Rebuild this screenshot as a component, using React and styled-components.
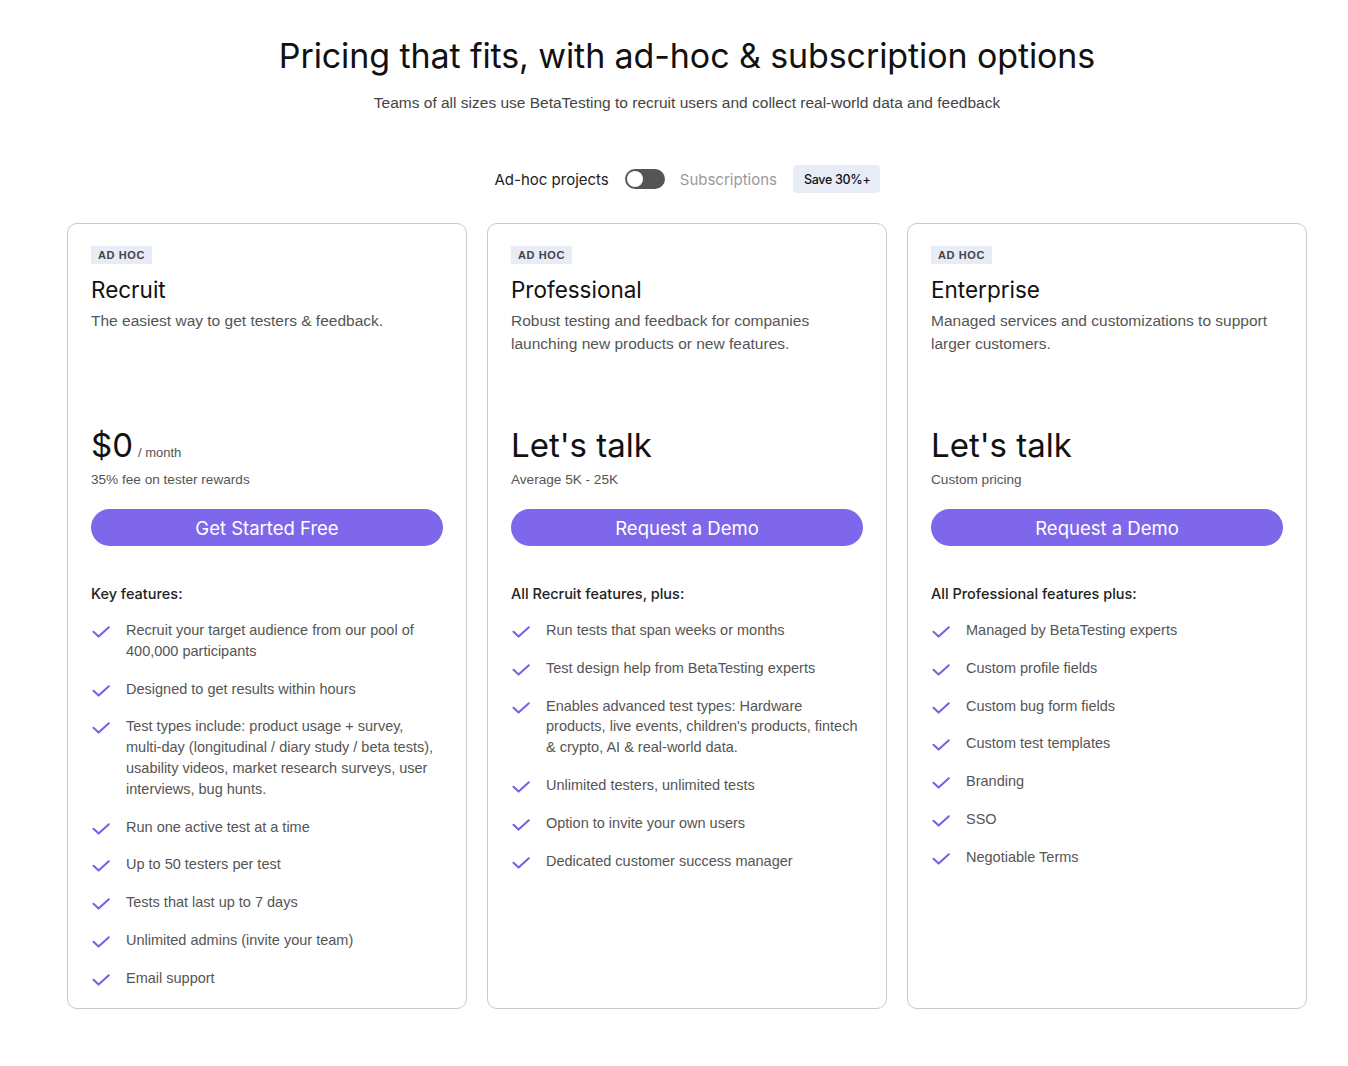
import React from 'react';
import styled, { createGlobalStyle } from 'styled-components';

const GlobalStyle = createGlobalStyle`
  * { box-sizing: border-box; }
  body {
    margin: 0;
    background: #ffffff;
    font-family: 'Liberation Sans', Arial, sans-serif;
    color: #222;
  }
`;

const plans = [
  {
    name: 'Recruit',
    desc: 'The easiest way to get testers & feedback.',
    price: '$0',
    per: '/ month',
    note: '35% fee on tester rewards',
    cta: 'Get Started Free',
    heading: 'Key features:',
    features: [
      'Recruit your target audience from our pool of 400,000 participants',
      'Designed to get results within hours',
      'Test types include: product usage + survey, multi\u2011day (longitudinal / diary study / beta tests), usability videos, market research surveys, user interviews, bug hunts.',
      'Run one active test at a time',
      'Up to 50 testers per test',
      'Tests that last up to 7 days',
      'Unlimited admins (invite your team)',
      'Email support',
    ],
  },
  {
    name: 'Professional',
    desc: 'Robust testing and feedback for companies launching new products or new features.',
    price: "Let's talk",
    note: 'Average 5K - 25K',
    cta: 'Request a Demo',
    heading: 'All Recruit features, plus:',
    features: [
      'Run tests that span weeks or months',
      'Test design help from BetaTesting experts',
      "Enables advanced test types: Hardware products, live events, children's products, fintech & crypto, AI & real-world data.",
      'Unlimited testers, unlimited tests',
      'Option to invite your own users',
      'Dedicated customer success manager',
    ],
  },
  {
    name: 'Enterprise',
    desc: 'Managed services and customizations to support larger customers.',
    price: "Let's talk",
    note: 'Custom pricing',
    cta: 'Request a Demo',
    heading: 'All Professional features plus:',
    features: [
      'Managed by BetaTesting experts',
      'Custom profile fields',
      'Custom bug form fields',
      'Custom test templates',
      'Branding',
      'SSO',
      'Negotiable Terms',
    ],
  },
];

function Check() {
  return (
    <CheckIcon viewBox="0 0 18 12" width="18" height="12">
      <path d="M1.5 5.8 L6.6 10.6 L16.8 1.2" fill="none" stroke="#7b5ce8" strokeWidth="2" strokeLinecap="round" strokeLinejoin="round" />
    </CheckIcon>
  );
}

export default function App() {
  return (
    <>
      <GlobalStyle />
      <Page>
        <Title>Pricing that fits, with ad-hoc &amp; subscription options</Title>
        <Subtitle>Teams of all sizes use BetaTesting to recruit users and collect real-world data and feedback</Subtitle>
        <ToggleRow>
          <ToggleLabel active>Ad-hoc projects</ToggleLabel>
          <Switch><Knob /></Switch>
          <ToggleLabel>Subscriptions</ToggleLabel>
          <SaveBadge>Save 30%+</SaveBadge>
        </ToggleRow>
        <Cards>
          {plans.map(plan => (
            <Card key={plan.name}>
              <Header>
                <Tag>AD HOC</Tag>
                <PlanName>{plan.name}</PlanName>
                <PlanDesc>{plan.desc}</PlanDesc>
              </Header>
              <Price>
                {plan.price}
                {plan.per && <Per>{plan.per}</Per>}
              </Price>
              <PriceNote>{plan.note}</PriceNote>
              <CtaButton>{plan.cta}</CtaButton>
              <FeatureHeading>{plan.heading}</FeatureHeading>
              <FeatureList>
                {plan.features.map(f => (
                  <Feature key={f}>
                    <Check />
                    <span>{f}</span>
                  </Feature>
                ))}
              </FeatureList>
            </Card>
          ))}
        </Cards>
      </Page>
    </>
  );
}

const Page = styled.div`
  width: 1348px;
  padding: 34px 0 56px 26px;
  display: flex;
  flex-direction: column;
  align-items: center;
`;

const Title = styled.h1`
  margin: 0;
  font-family: 'Inter', sans-serif;
  font-weight: 400;
  font-size: 34px;
  line-height: 44px;
  letter-spacing: -0.1px;
  color: #111;
`;

const Subtitle = styled.p`
  margin: 15px 0 0;
  font-size: 15.5px;
  line-height: 20px;
  color: #444;
`;

const ToggleRow = styled.div`
  display: flex;
  align-items: center;
  margin-top: 52px;
  height: 28px;
`;

const ToggleLabel = styled.span`
  font-family: 'Inter', sans-serif;
  font-size: 15px;
  color: ${props => (props.active ? '#222' : '#999')};
`;

const Switch = styled.div`
  width: 40px;
  height: 20px;
  margin: 0 15px 0 16px;
  border-radius: 10px;
  background: #555;
  padding: 2px;
  display: flex;
`;

const Knob = styled.div`
  width: 16px;
  height: 16px;
  border-radius: 50%;
  background: #fff;
`;

const SaveBadge = styled.span`
  margin-left: 16px;
  height: 28px;
  padding: 0 9px 0 11px;
  display: flex;
  align-items: center;
  background: #e8ecf7;
  border-radius: 4px;
  font-family: 'Inter', sans-serif;
  font-size: 12.5px;
  font-weight: 500;
  letter-spacing: -0.3px;
  color: #111;
`;

const Cards = styled.div`
  display: grid;
  grid-template-columns: repeat(3, 400px);
  gap: 20px;
  margin-top: 30px;
  align-items: stretch;
`;

const Card = styled.div`
  border: 1px solid #c9c9c9;
  border-radius: 10px;
  padding: 21px 23px 19px;
  display: flex;
  flex-direction: column;
`;

const Header = styled.div`
  height: 180px;
`;

const Tag = styled.span`
  display: inline-block;
  height: 18px;
  line-height: 18px;
  padding: 0 7px;
  background: #e8ecf7;
  font-size: 11px;
  font-weight: 700;
  letter-spacing: 0.6px;
  color: #444;
`;

const PlanName = styled.h2`
  margin: 12px 0 0;
  font-family: 'Inter', sans-serif;
  font-weight: 400;
  font-size: 22.5px;
  line-height: 28px;
  color: #111;
`;

const PlanDesc = styled.p`
  margin: 5px 0 0;
  font-size: 15.5px;
  line-height: 23px;
  color: #555;
`;

const Price = styled.div`
  height: 40px;
  font-family: 'Inter', sans-serif;
  font-size: 33px;
  line-height: 40px;
  color: #111;
  display: flex;
  align-items: baseline;
`;

const Per = styled.span`
  margin-left: 5px;
  font-family: 'Liberation Sans', Arial, sans-serif;
  font-size: 13px;
  line-height: 1;
  color: #555;
`;

const PriceNote = styled.div`
  margin-top: 6px;
  font-size: 13.6px;
  line-height: 18px;
  color: #555;
`;

const CtaButton = styled.button`
  margin-top: 20px;
  height: 37px;
  width: 100%;
  border: none;
  border-radius: 19px;
  background: #7f67eb;
  color: #fff;
  font-family: 'Inter', sans-serif;
  font-size: 18.5px;
  cursor: pointer;
`;

const FeatureHeading = styled.div`
  margin-top: 38px;
  font-family: 'Inter', sans-serif;
  font-size: 14.5px;
  line-height: 20px;
  font-weight: 500;
  color: #222;
`;

const FeatureList = styled.ul`
  list-style: none;
  margin: 16px 0 0;
  padding: 0;
  display: flex;
  flex-direction: column;
  gap: 17px;
`;

const Feature = styled.li`
  display: flex;
  align-items: flex-start;
  font-size: 14.5px;
  line-height: 20.8px;
  color: #555;
`;

const CheckIcon = styled.svg`
  flex: none;
  margin: 6px 16px 0 1px;
`;
